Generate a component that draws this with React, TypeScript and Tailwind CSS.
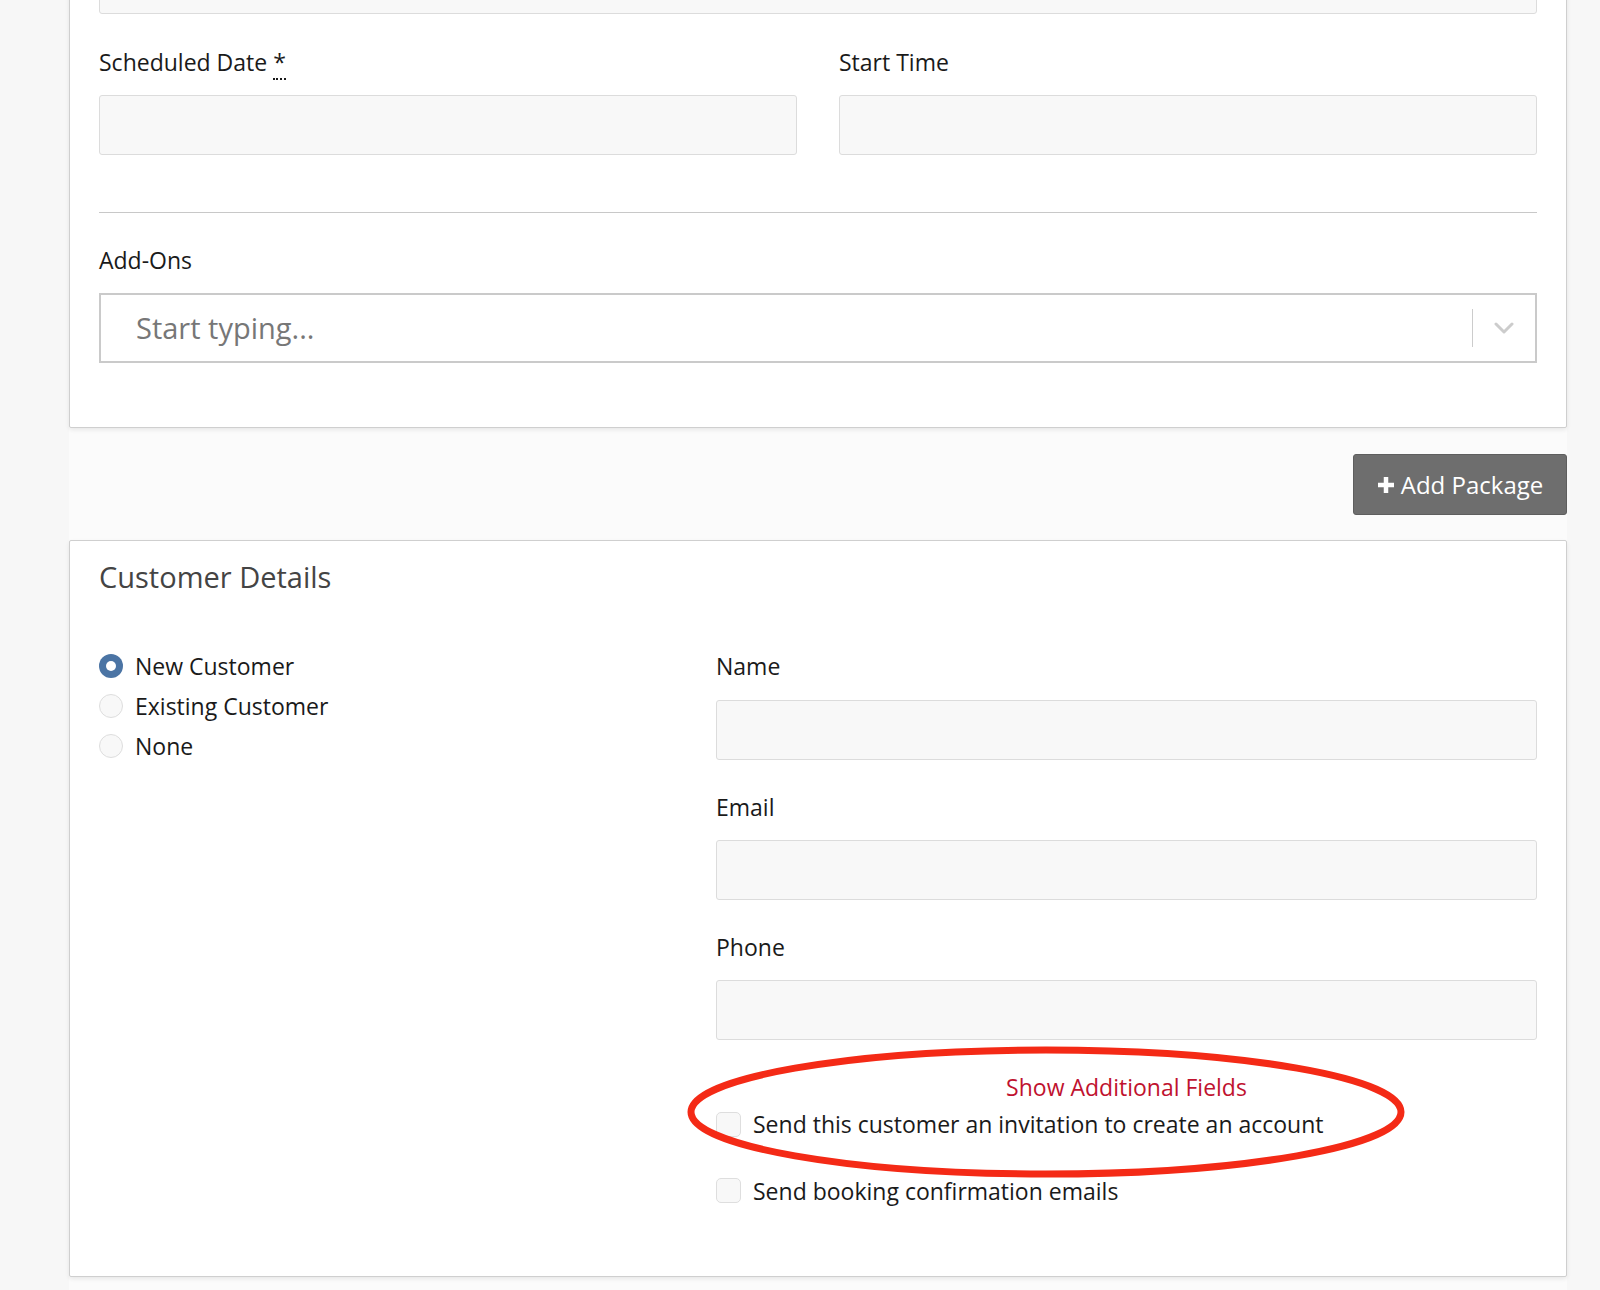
import React from "react";

const font = { fontFamily: "'Open Sans', 'Noto Sans', sans-serif" };

function Label({ children }: { children: React.ReactNode }) {
  return <div className="text-[23px] leading-[24px] text-[#1a1a1a]">{children}</div>;
}

function Input() {
  return <div className="h-[60px] w-full rounded-[3px] border border-[#dcdcdc] bg-[#f8f8f8]" />;
}

function Radio({ checked, label }: { checked?: boolean; label: string }) {
  return (
    <div className="flex h-[40px] items-center gap-[12px]">
      {checked ? (
        <span className="flex h-[24px] w-[24px] items-center justify-center rounded-full bg-[#4b74a4]">
          <span className="h-[10px] w-[10px] rounded-full bg-white" />
        </span>
      ) : (
        <span className="h-[24px] w-[24px] rounded-full border border-[#dedede] bg-[#f8f8f8]" />
      )}
      <span className="text-[23px] text-[#1a1a1a]">{label}</span>
    </div>
  );
}

function Checkbox({ label }: { label: string }) {
  return (
    <div className="flex items-center gap-[12px]">
      <span className="h-[25px] w-[25px] rounded-[5px] border border-[#dedede] bg-[#f8f8f8]" />
      <span className="text-[23px] text-[#1a1a1a]">{label}</span>
    </div>
  );
}

export default function App() {
  return (
    <div className="min-h-[1290px] w-full overflow-hidden bg-[#f7f7f7]" style={font}>
      <div className="ml-[69px] w-[1498px] bg-[#fbfbfb]">
        {/* Card 1 */}
        <div className="-mt-[60px] rounded-b-[2px] border border-[#cfcfcf] bg-white px-[29px] pb-[64px] shadow-[0_2px_4px_rgba(0,0,0,0.08)]">
          <div className="pt-[13px]">
            <Input />
          </div>
          <div className="mt-[36px] grid grid-cols-2 gap-[42px]">
            <div>
              <Label>
                Scheduled Date{" "}
                <abbr className="no-underline border-b-2 border-dotted border-[#1a1a1a]" title="required">
                  *
                </abbr>
              </Label>
              <div className="mt-[21px]">
                <Input />
              </div>
            </div>
            <div>
              <Label>Start Time</Label>
              <div className="mt-[21px]">
                <Input />
              </div>
            </div>
          </div>
          <div className="mt-[57px] h-px bg-[#c8c8c8]" />
          <div className="mt-[35px]">
            <Label>Add-Ons</Label>
          </div>
          <div className="mt-[21px] flex h-[70px] items-center border-2 border-[#cacaca] bg-white">
            <span className="flex-1 pl-[35px] text-[29px] text-[#777777]">Start typing...</span>
            <span className="h-[38px] w-px bg-[#cccccc]" />
            <span className="flex w-[62px] items-center justify-center">
              <svg width="20" height="12" viewBox="0 0 20 12" fill="none">
                <path d="M2 2l8 8 8-8" stroke="#cccccc" strokeWidth="3" strokeLinecap="round" strokeLinejoin="round" />
              </svg>
            </span>
          </div>
        </div>

        {/* Button row */}
        <div className="flex justify-end pt-[26px] pb-[25px]">
          <button className="flex h-[61px] w-[214px] items-center justify-center gap-[6px] rounded-[3px] border border-[#5e5e5e] bg-[#6e6e6e] text-[24px] text-white">
            <svg width="18" height="18" viewBox="0 0 18 18">
              <path d="M9 1v16M1 9h16" stroke="white" strokeWidth="4.5" />
            </svg>
            Add Package
          </button>
        </div>

        {/* Card 2 */}
        <div className="relative rounded-[2px] border border-[#cfcfcf] bg-white px-[29px] pt-[19px] pb-[68px] shadow-[0_2px_4px_rgba(0,0,0,0.08)]">
          <h2 className="text-[29px] leading-[34px] text-[#444444]">Customer Details</h2>
          <div className="mt-[60px] flex">
            <div className="w-[617px] -mt-[8px]">
              <Radio checked label="New Customer" />
              <Radio label="Existing Customer" />
              <Radio label="None" />
            </div>
            <div className="flex-1">
              <Label>Name</Label>
              <div className="mt-[22px]">
                <Input />
              </div>
              <div className="mt-[35px]">
                <Label>Email</Label>
              </div>
              <div className="mt-[21px]">
                <Input />
              </div>
              <div className="mt-[35px]">
                <Label>Phone</Label>
              </div>
              <div className="mt-[21px]">
                <Input />
              </div>
              <div className="mt-[35px] text-center text-[23px] leading-[24px] text-[#c0122f]">
                Show Additional Fields
              </div>
              <div className="mt-[8px]">
                <Checkbox label="Send this customer an invitation to create an account" />
              </div>
              <div className="mt-[32px]">
                <Checkbox label="Send booking confirmation emails" />
              </div>
            </div>
          </div>
          <svg
            className="pointer-events-none absolute left-[615px] top-[504px]"
            width="722"
            height="136"
            viewBox="0 0 722 136"
          >
            <ellipse cx="361" cy="67" rx="355" ry="62" fill="none" stroke="#f42a16" strokeWidth="7" />
          </svg>
        </div>
        <div className="h-[20px]" />
      </div>
    </div>
  );
}
